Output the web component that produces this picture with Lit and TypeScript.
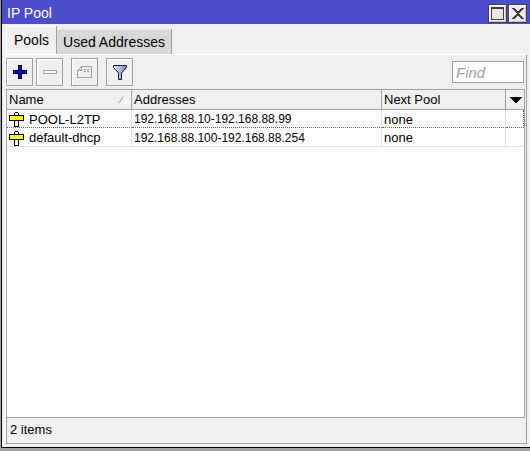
import { LitElement, html, css, svg } from "lit";
import { customElement, state } from "lit/decorators.js";
import { classMap } from "lit/directives/class-map.js";

interface Pool {
  name: string;
  addresses: string;
  next: string;
}

const pools: Pool[] = [
  { name: "POOL-L2TP", addresses: "192.168.88.10-192.168.88.99", next: "none" },
  { name: "default-dhcp", addresses: "192.168.88.100-192.168.88.254", next: "none" },
];

const icon = (w: number, h: number, body: unknown) => html`
  <svg width=${w} height=${h} viewBox="0 0 ${w} ${h}" shape-rendering="crispEdges" aria-hidden="true">${body}</svg>
`;

const maximizeIcon = icon(13, 13, svg`
  <path fill="#404040" fill-rule="evenodd" d="M0 0H13V13H0ZM1 2V12H12V2Z"/>`);

const closeIcon = icon(12, 11, svg`
  <path fill="#404040" d="M0 0h3v1h1v1h1v1h2v-1h1v-1h1v-1h3v1h-1v1h-1v1h-1v1h-1v1h-1v1h1v1h1v1h1v1h1v1h1v1h-3v-1h-1v-1h-1v-1h-2v1h-1v1h-1v1h-3v-1h1v-1h1v-1h1v-1h1v-1h1v-1h-1v-1h-1v-1h-1v-1h-1v-1h-1z"/>`);

const plusIcon = icon(14, 14, svg`
  <path d="M5 0H9V5H14V9H9V14H5V9H0V5H5Z"/>
  <path fill="#0000ff" d="M6 1H8V6H13V8H8V13H6V8H1V6H6Z"/>`);

const minusIcon = icon(14, 4, svg`
  <path fill="#a0a0a0" d="M0 0H14V4H0Z"/><path fill="#f8f8f8" d="M1 1H13V3H1Z"/>`);

const commentIcon = icon(15, 12, svg`
  <path fill="none" stroke="#a0a0a0" d="M4.5 .5H14.5V11.5H.5V4.5L4.5 .5V4.5H.5"/>
  <path fill="#a0a0a0" d="M7 3h2v1h-2zM10 3h2v1h-2zM7 5h2v1h-2zM10 5h2v1h-2z"/>`);

const filterIcon = html`
  <svg width="14" height="15" viewBox="0 0 14 15" aria-hidden="true">
    <defs>
      <linearGradient id="metal">
        <stop offset="0" stop-color="#eef4ff"/>
        <stop offset="1" stop-color="#6080d0"/>
      </linearGradient>
    </defs>
    <path fill="url(#metal)" stroke="#101828" d="M.5 .5H13.5V2.5L8.5 8V14.5H5.5V8L.5 2.5Z"/>
  </svg>`;

const poolIcon = icon(15, 15, svg`
  <path d="M6 0H9V1H10V15H5V1H6Z"/>
  <path fill="#fff" d="M6 1H9V3H6ZM6 9H9V14H6Z"/>
  <path d="M0 3H15V9H0Z"/>
  <path fill="#ffff00" d="M1 4H14V8H1Z"/>`);

const sortIcon = html`
  <svg width="9" height="8" viewBox="0 0 9 8" aria-hidden="true">
    <path fill="none" stroke="#fff" d="M6 0L8.5 7.5H0"/>
    <path fill="none" stroke="#a0a0a0" d="M.5 7.5L5.5 .5"/>
  </svg>`;

const arrowIcon = icon(12, 6, svg`<path d="M0 0h12v1h-1v1h-1v1h-1v1h-1v1h-1v1h-2v-1h-1v-1h-1v-1h-1v-1h-1v-1h-1z"/>`);

@customElement("app-root")
export class AppRoot extends LitElement {
  @state() private tab = "Pools";

  static styles = css`
    :host {
      display: block;
      height: 100vh;
      box-sizing: border-box;
      padding: 0 0 3px 1px;
      background: #a0a0a0;
      color: #000;
      font: 14px/18px "Liberation Sans", Arial, sans-serif;
    }
    * { box-sizing: border-box; }
    svg { display: block; flex: none; }
    button { padding: 0; border-radius: 0; font: inherit; color: inherit; }
    .window {
      display: flex;
      flex-direction: column;
      height: 100%;
      background: #f0f0f0;
      border: solid #000;
      border-width: 0 0 1px 1px;
    }
    .title {
      display: flex;
      align-items: center;
      gap: 1px;
      height: 24px;
      flex: none;
      padding: 2px 3px 0 5px;
      background: #4c4ccc;
      color: #fff;
    }
    .title h1 { flex: 1; margin: 0; font: inherit; }
    .title button {
      display: flex;
      align-items: center;
      justify-content: center;
      width: 19px;
      height: 19px;
      background: #f0e8e8;
      border: 1px solid #404040;
      box-shadow: inset 1px 1px #fff, inset -1px -1px #c8c8c8;
    }
    .tabs {
      display: flex;
      align-items: flex-end;
      height: 30px;
      flex: none;
      padding-left: 4px;
    }
    .tab {
      height: 25px;
      padding: 0 6px;
      background: #d8d8d8;
      border: solid #a0a0a0;
      border-width: 0 1px 0 0;
      box-shadow: inset 0 1px #e8e8e8;
    }
    .tab.active {
      height: 28px;
      padding: 0 7px 0 8px;
      background: #f0f0f0;
      box-shadow: inset 1px 1px #fff;
    }
    .panel {
      display: flex;
      flex-direction: column;
      flex: 1;
      min-height: 0;
      margin: 0 3px 3px;
      border: 1px solid #a0a0a0;
      border-color: #fff #a0a0a0 #a0a0a0 #fff;
    }
    .toolbar {
      display: flex;
      align-items: center;
      height: 34px;
      flex: none;
      gap: 3px;
    }
    .tool {
      display: flex;
      align-items: center;
      justify-content: center;
      width: 27px;
      height: 28px;
      background: #f0f0f0;
      border: 1px solid #a0a0a0;
      box-shadow: inset 1px 1px #fff;
    }
    .group { margin-left: 5px; }
    .find {
      width: 72px;
      height: 22px;
      margin: 0 2px 0 auto;
      padding: 0 3px;
      border: 1px solid #a0a0a0;
      border-radius: 0;
      background: #fff;
      font: italic 15px/18px "Liberation Sans", Arial, sans-serif;
    }
    .find::placeholder { color: #a0a0a0; opacity: 1; }
    .list {
      flex: 1;
      min-height: 0;
      margin-right: 1px;
      background: #fff;
      border: 1px solid #a0a0a0;
    }
    table {
      width: 100%;
      table-layout: fixed;
      border-collapse: separate;
      border-spacing: 0;
      font-size: 13px;
    }
    .name { width: 125px; }
    .next { width: 124px; }
    .menu { width: 18px; }
    th {
      height: 20px;
      padding: 1px 0 0 2px;
      background: #f0f0f0;
      border: solid #a0a0a0;
      border-width: 0 1px 1px 0;
      font-weight: normal;
      text-align: left;
    }
    th:last-child, td:last-child { border-right: 0; }
    td {
      height: 19px;
      padding: 2px 0 0 2px;
      border: solid #e0e0e0;
      border-width: 0 1px 1px 0;
      line-height: 16px;
      white-space: nowrap;
    }
    .focused td { height: 18px; line-height: 15px; border-bottom: 1px dotted #606060; }
    .focused td:last-child { border-right: 1px dotted #606060; }
    .cell { display: flex; align-items: center; gap: 5px; }
    .heading { display: flex; align-items: center; justify-content: space-between; padding-right: 4px; }
    .numbers { font-size: 12px; }
    .columns { display: block; padding: 6px 2px; background: none; border: 0; }
    .status {
      height: 25px;
      flex: none;
      padding: 3px 3px;
      border-left: 1px solid #a0a0a0;
      font-size: 13px;
    }
  `;

  private renderTab(label: string) {
    const active = this.tab === label;
    return html`<button role="tab" aria-selected=${active} class=${classMap({ tab: true, active })}
      @click=${() => { this.tab = label; }}>${label}</button>`;
  }

  render() {
    return html`
      <main class="window">
        <header class="title">
          <h1>IP Pool</h1>
          <button aria-label="Maximize">${maximizeIcon}</button>
          <button aria-label="Close">${closeIcon}</button>
        </header>
        <div class="tabs" role="tablist">${this.renderTab("Pools")}${this.renderTab("Used Addresses")}</div>
        <section class="panel">
          <div class="toolbar">
            <button class="tool" aria-label="Add">${plusIcon}</button>
            <button class="tool" aria-label="Remove" disabled>${minusIcon}</button>
            <button class="tool group" aria-label="Comment" disabled>${commentIcon}</button>
            <button class="tool group" aria-label="Filter">${filterIcon}</button>
            <input class="find" type="text" placeholder="Find" aria-label="Find">
          </div>
          <div class="list">
            <table>
              <colgroup><col class="name"><col><col class="next"><col class="menu"></colgroup>
              <thead>
                <tr>
                  <th><div class="heading">Name ${sortIcon}</div></th>
                  <th>Addresses</th>
                  <th>Next Pool</th>
                  <th><button class="columns" aria-label="Columns">${arrowIcon}</button></th>
                </tr>
              </thead>
              <tbody>
                ${pools.map((pool, i) => html`
                  <tr class=${classMap({ focused: i === 0 })}>
                    <td><div class="cell">${poolIcon}${pool.name}</div></td>
                    <td class="numbers">${pool.addresses}</td>
                    <td>${pool.next}</td>
                    <td></td>
                  </tr>`)}
              </tbody>
            </table>
          </div>
          <footer class="status">${pools.length} items</footer>
        </section>
      </main>
    `;
  }
}
